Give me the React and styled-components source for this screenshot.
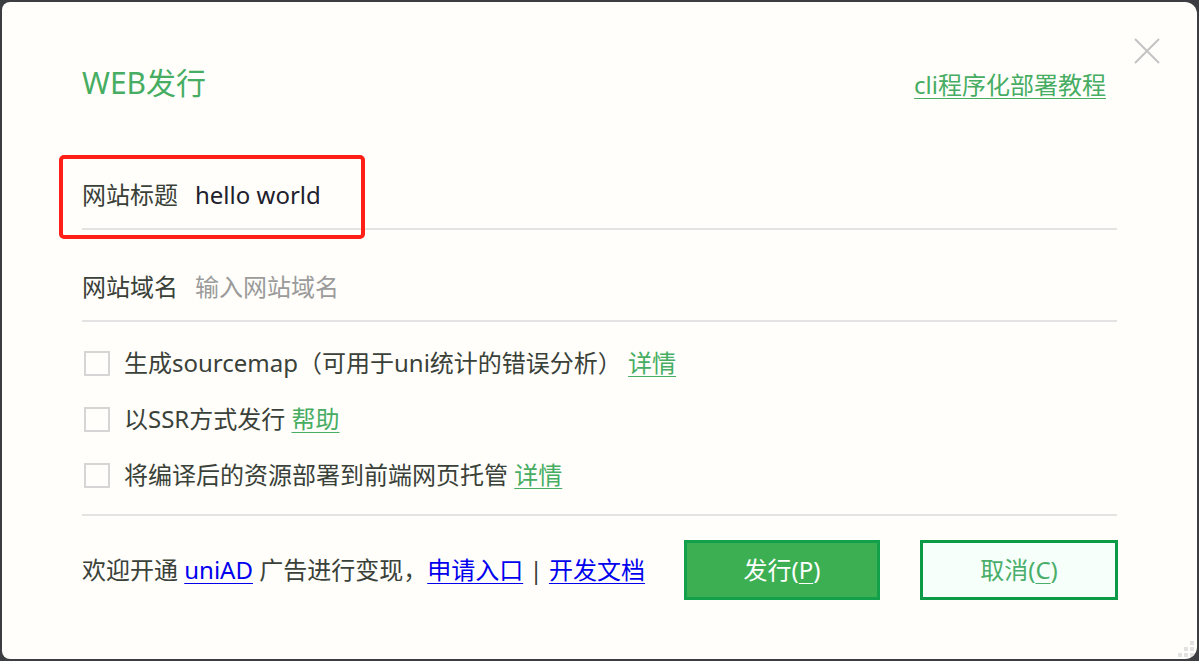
import React from 'react';
import styled, { createGlobalStyle } from 'styled-components';

const GREEN = '#46ad63';
const LINE = '#e3e3e3';

const GlobalStyle = createGlobalStyle`
	html,
	body {
		margin: 0;
		padding: 0;
		background: #3b3d41;
	}

	body {
		font-family: "Noto Sans", "Noto Sans CJK SC", sans-serif;
	}
`;

const Frame = styled.div`
	position: relative;
	box-sizing: border-box;
	margin: 2px;
	height: 657px;
	padding: 56px 80px 0;
	display: flex;
	flex-direction: column;
	background: #fffefa;
	border-radius: 8px 12px 12px 8px;
	overflow: hidden;
`;

const Header = styled.div`
	display: flex;
	align-items: center;
	justify-content: space-between;
	height: 50px;
	padding-right: 11px;
`;

const Title = styled.h1`
	margin: 0;
	font-size: 30px;
	font-weight: 400;
	line-height: 40px;
	color: ${GREEN};
`;

const GreenLink = styled.a`
	color: ${GREEN};
	font-size: ${(p) => p.$size || 24}px;
	text-decoration: underline;
	text-underline-offset: 4px;
	text-decoration-thickness: 1px;
	cursor: pointer;
`;

const CloseButton = styled.button`
	position: absolute;
	top: 36px;
	right: 37px;
	width: 26px;
	height: 26px;
	padding: 0;
	border: none;
	background: transparent;
	cursor: pointer;

	svg {
		display: block;
	}
`;

const Highlight = styled.div`
	position: absolute;
	left: 57px;
	top: 153px;
	width: 306px;
	height: 84px;
	box-sizing: border-box;
	border: 4px solid #ff1f17;
	border-radius: 5px;
	pointer-events: none;
`;

const FieldRow = styled.label`
	display: flex;
	align-items: flex-start;
	gap: 17px;
	box-sizing: border-box;
	height: 92px;
	padding-top: 39px;
	margin-top: ${(p) => (p.$first ? 30 : 0)}px;
	border-bottom: 2px solid ${LINE};
`;

const FieldLabel = styled.span`
	font-size: 24px;
	line-height: 36px;
	color: #3a4139;
	white-space: nowrap;
`;

const FieldInput = styled.input`
	flex: 1;
	height: 36px;
	padding: 0;
	border: none;
	outline: none;
	background: transparent;
	font-family: inherit;
	font-size: 24px;
	line-height: 36px;
	color: #20202c;

	&::placeholder {
		color: #9b9b9b;
	}
`;

const OptionList = styled.div`
	margin-top: 13px;
	padding-bottom: 11px;
	border-bottom: 2px solid ${LINE};
`;

const Option = styled.label`
	display: flex;
	align-items: center;
	gap: 14px;
	height: 56px;
	font-size: 24px;
	line-height: 32px;
	color: #3a4139;
`;

const Box = styled.span`
	box-sizing: border-box;
	width: 26px;
	height: 25px;
	margin-left: 2px;
	border: 2px solid #d5d5d5;
	background: #fffefa;
	flex-shrink: 0;
`;

const Footer = styled.div`
	display: flex;
	align-items: center;
	justify-content: space-between;
	padding-top: 24px;
`;

const Note = styled.div`
	font-size: 24px;
	line-height: 32px;
	color: #3a4139;
	white-space: nowrap;

	a {
		color: #0000ee;
		text-decoration: underline;
		text-underline-offset: 4px;
		text-decoration-thickness: 1px;
	}
`;

const Buttons = styled.div`
	display: flex;
	gap: 40px;
	margin-right: -1px;
`;

const Button = styled.button`
	box-sizing: border-box;
	width: ${(p) => (p.$primary ? 196 : 198)}px;
	height: 60px;
	padding: 0;
	font-family: inherit;
	font-size: 24px;
	line-height: 32px;
	cursor: pointer;
	border: ${(p) => (p.$primary ? '3px solid #12a04a' : '3px solid #0b9b46')};
	background: ${(p) => (p.$primary ? '#3daf53' : '#f6fff9')};
	color: ${(p) => (p.$primary ? '#ffffff' : '#4aae6a')};

	u {
		text-underline-offset: 4px;
		text-decoration-thickness: 1px;
	}
`;

const Grip = styled.svg`
	position: absolute;
	right: 3px;
	bottom: 2px;
`;

const options = [
	{ text: '生成sourcemap（可用于uni统计的错误分析）', link: '详情' },
	{ text: '以SSR方式发行', link: '帮助' },
	{ text: '将编译后的资源部署到前端网页托管', link: '详情' },
];

export default function App() {
	return (
		<>
			<GlobalStyle />
			<Frame>
				<Header>
					<Title>WEB发行</Title>
					<GreenLink>cli程序化部署教程</GreenLink>
				</Header>

				<CloseButton aria-label="关闭">
					<svg width="26" height="26" viewBox="0 0 26 26">
						<path d="M1 1 L25 25 M25 1 L1 25" stroke="#c3c3c3" strokeWidth="2" fill="none" />
					</svg>
				</CloseButton>

				<FieldRow $first>
					<FieldLabel>网站标题</FieldLabel>
					<FieldInput defaultValue="hello world" />
				</FieldRow>
				<FieldRow>
					<FieldLabel>网站域名</FieldLabel>
					<FieldInput placeholder="输入网站域名" />
				</FieldRow>

				<OptionList>
					{options.map((opt) => (
						<Option key={opt.text}>
							<Box />
							<span>
								{opt.text} <GreenLink>{opt.link}</GreenLink>
							</span>
						</Option>
					))}
				</OptionList>

				<Footer>
					<Note>
						欢迎开通 <a>uniAD</a> 广告进行变现，<a>申请入口</a> | <a>开发文档</a>
					</Note>
					<Buttons>
						<Button $primary>
							发行(<u>P</u>)
						</Button>
						<Button>
							取消(<u>C</u>)
						</Button>
					</Buttons>
				</Footer>

				<Highlight />

				<Grip width="16" height="16" viewBox="0 0 16 16">
					{[
						[12, 0],
						[6, 6],
						[12, 6],
						[0, 12],
						[6, 12],
						[12, 12],
					].map(([x, y]) => (
						<rect key={`${x}-${y}`} x={x} y={y} width="4" height="4" fill="#e2e2e2" />
					))}
				</Grip>
			</Frame>
		</>
	);
}
